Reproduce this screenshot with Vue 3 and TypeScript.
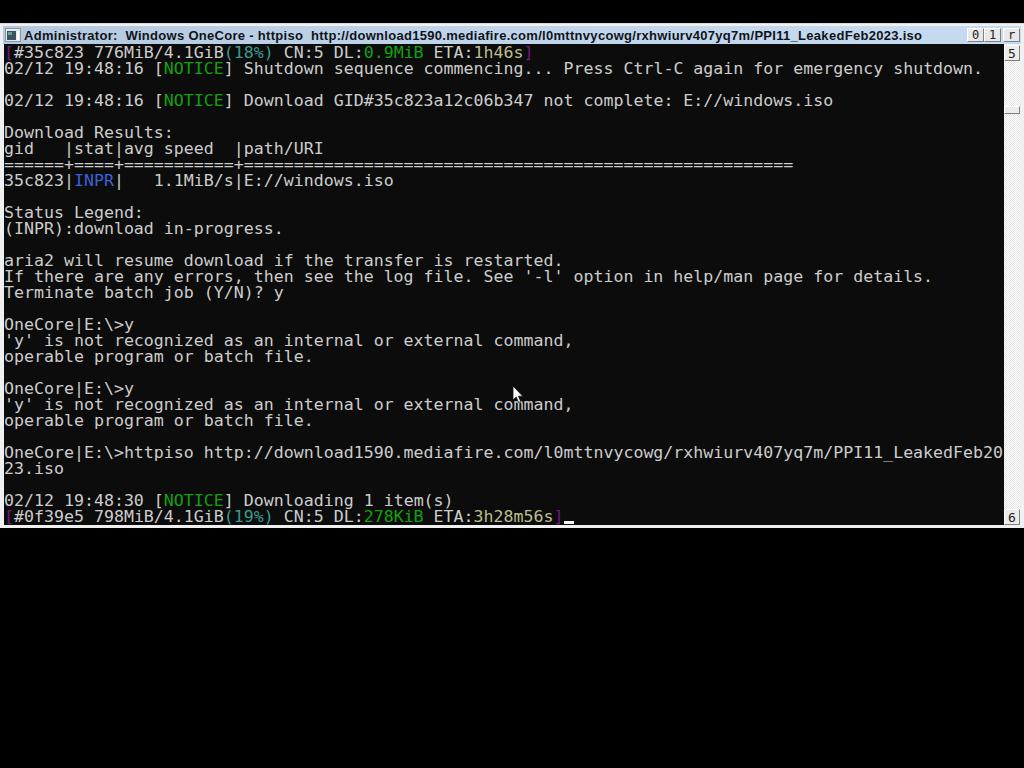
<script setup lang="ts">
type Seg = { t: string; c?: string };
const windowTitle =
  "Administrator:  Windows OneCore - httpiso  http://download1590.mediafire.com/l0mttnvycowg/rxhwiurv407yq7m/PPI11_LeakedFeb2023.iso";
const notice = (pre: string, post: string): Seg[] => [
  { t: pre + " [" },
  { t: "NOTICE", c: "g" },
  { t: "] " + post },
];
const lines: Seg[][] = [
  [{ t: "[", c: "p" }, { t: "#35c823 776MiB/4.1GiB" }, { t: "(18%)", c: "t" }, { t: " CN:5 DL:" }, { t: "0.9MiB", c: "g" }, { t: " ETA:" }, { t: "1h46s", c: "y" }, { t: "]", c: "p" }],
  notice("02/12 19:48:16", "Shutdown sequence commencing... Press Ctrl-C again for emergency shutdown."),
  [],
  notice("02/12 19:48:16", "Download GID#35c823a12c06b347 not complete: E://windows.iso"),
  [],
  [{ t: "Download Results:" }],
  [{ t: "gid   |stat|avg speed  |path/URI" }],
  [{ t: "======+====+===========+=======================================================" }],
  [{ t: "35c823|" }, { t: "INPR", c: "b" }, { t: "|   1.1MiB/s|E://windows.iso" }],
  [],
  [{ t: "Status Legend:" }],
  [{ t: "(INPR):download in-progress." }],
  [],
  [{ t: "aria2 will resume download if the transfer is restarted." }],
  [{ t: "If there are any errors, then see the log file. See '-l' option in help/man page for details." }],
  [{ t: "Terminate batch job (Y/N)? y" }],
  [],
  [{ t: "OneCore|E:\\>y" }],
  [{ t: "'y' is not recognized as an internal or external command," }],
  [{ t: "operable program or batch file." }],
  [],
  [{ t: "OneCore|E:\\>y" }],
  [{ t: "'y' is not recognized as an internal or external command," }],
  [{ t: "operable program or batch file." }],
  [],
  [{ t: "OneCore|E:\\>httpiso http://download1590.mediafire.com/l0mttnvycowg/rxhwiurv407yq7m/PPI11_LeakedFeb20" }],
  [{ t: "23.iso" }],
  [],
  notice("02/12 19:48:30", "Downloading 1 item(s)"),
  [{ t: "[", c: "p" }, { t: "#0f39e5 798MiB/4.1GiB" }, { t: "(19%)", c: "t" }, { t: " CN:5 DL:" }, { t: "278KiB", c: "g" }, { t: " ETA:" }, { t: "3h28m56s", c: "y" }, { t: "]", c: "p" }],
];
</script>

<template>
  <div class="screen">
    <div class="window">
      <div class="titlebar">
        <svg class="appicon" width="16" height="14" viewBox="0 0 16 14">
          <rect x="0.5" y="0.5" width="15" height="13" fill="#e6ebf0" stroke="#8a98a6" />
          <rect x="2" y="3" width="9" height="9" fill="#3d5560" />
          <rect x="3" y="4" width="4" height="3" fill="#6f9a9a" />
          <rect x="12" y="3" width="2" height="9" fill="#f8fafc" />
        </svg>
        <div class="title">{{ windowTitle }}</div>
        <div class="buttons">
          <span class="wbtn">0</span><span class="wbtn">1</span><span class="wbtn close">r</span>
        </div>
      </div>
      <div class="client">
        <div class="term">
          <div v-for="(line, i) in lines" :key="i" class="row">
            <span v-for="(s, j) in line" :key="j" :class="s.c">{{ s.t }}</span>
          </div>
          <span class="caret"></span>
          <svg class="pointer" width="12" height="19" viewBox="0 0 12 19">
            <path d="M1 1 V15 L4.2 12 L6.6 17.5 L8.8 16.5 L6.4 11.2 H10.8 Z" fill="#fff" stroke="#111" stroke-width="0.8" />
          </svg>
        </div>
        <div class="scrollbar">
          <span class="sbtn">5</span>
          <div class="track"><span class="thumb"></span></div>
          <span class="sbtn">6</span>
        </div>
      </div>
    </div>
  </div>
</template>

<style>
html, body { margin: 0; background: #000; }
</style>

<style scoped>
.screen {
  width: 1024px;
  height: 768px;
  background: #000;
  padding-top: 23px;
  box-sizing: border-box;
  overflow: hidden;
}
.window {
  height: 505px;
  background: #f0f0f0;
  box-sizing: border-box;
  padding: 2px 4px 3px 4px;
  display: flex;
  flex-direction: column;
  border-top: 1px solid #d8d8d8;
}
.titlebar {
  height: 18px;
  margin: 0 -1px;
  display: flex;
  align-items: center;
  background: linear-gradient(90deg, #b4c8de, #c0d4ea 50%, #c6daf0);
}
.appicon { margin-left: 2px; flex: none; }
.title {
  margin-left: 3px;
  padding-top: 2px;
  font: 700 13px/18px "Liberation Sans", sans-serif;
  letter-spacing: 0.295px;
  color: #10141a;
  white-space: pre;
}
.buttons {
  margin-left: auto;
  margin-right: 1px;
  display: flex;
}
.wbtn {
  width: 17px;
  height: 14px;
  font: 12px/13px "DejaVu Sans Mono", monospace;
  text-align: center;
  color: #222;
  background: #e8e8e8;
  border: 1px solid #fff;
  border-right-color: #808080;
  border-bottom-color: #808080;
  box-sizing: border-box;
}
.wbtn.close { margin-left: 2px; }
.client {
  flex: 1;
  display: flex;
  min-height: 0;
}
.term {
  width: 1000px;
  background: #0c0c0c;
  position: relative;
  overflow: hidden;
  box-sizing: border-box;
  padding-top: 1px;
  font: 16.6px/16px "DejaVu Sans Mono", monospace;
  color: #cccccc;
  white-space: pre;
}
.row { height: 16px; }
.row span {
  display: inline-block;
  height: 16px;
  line-height: 16px;
  vertical-align: top;
}
.g { color: #13a10e; }
.t { color: #3a9a8e; }
.y { color: #bdbd8a; }
.b { color: #3b62d8; }
.p { color: #741a7e; }
.caret {
  position: absolute;
  left: 560px;
  top: 477px;
  width: 10px;
  height: 3px;
  background: #f2f2f2;
}
.pointer {
  position: absolute;
  left: 508px;
  top: 341px;
}
.scrollbar {
  width: 16px;
  padding-top: 1px;
  display: flex;
  flex-direction: column;
  background: repeating-conic-gradient(#ffffff 0 25%, #e4e4e4 0 50%) 0 0 / 2px 2px;
}
.sbtn {
  height: 16px;
  width: 16px;
  flex: none;
  font: 13px/15px "DejaVu Sans Mono", monospace;
  text-align: center;
  color: #222;
  background: #ececec;
  border: 1px solid #fff;
  border-right-color: #808080;
  border-bottom-color: #808080;
  box-sizing: border-box;
}
.track { flex: 1; padding-top: 45px; }
.thumb {
  display: block;
  height: 8px;
  background: #ececec;
  border: 1px solid #fff;
  border-right-color: #808080;
  border-bottom-color: #808080;
  box-sizing: border-box;
}
</style>
